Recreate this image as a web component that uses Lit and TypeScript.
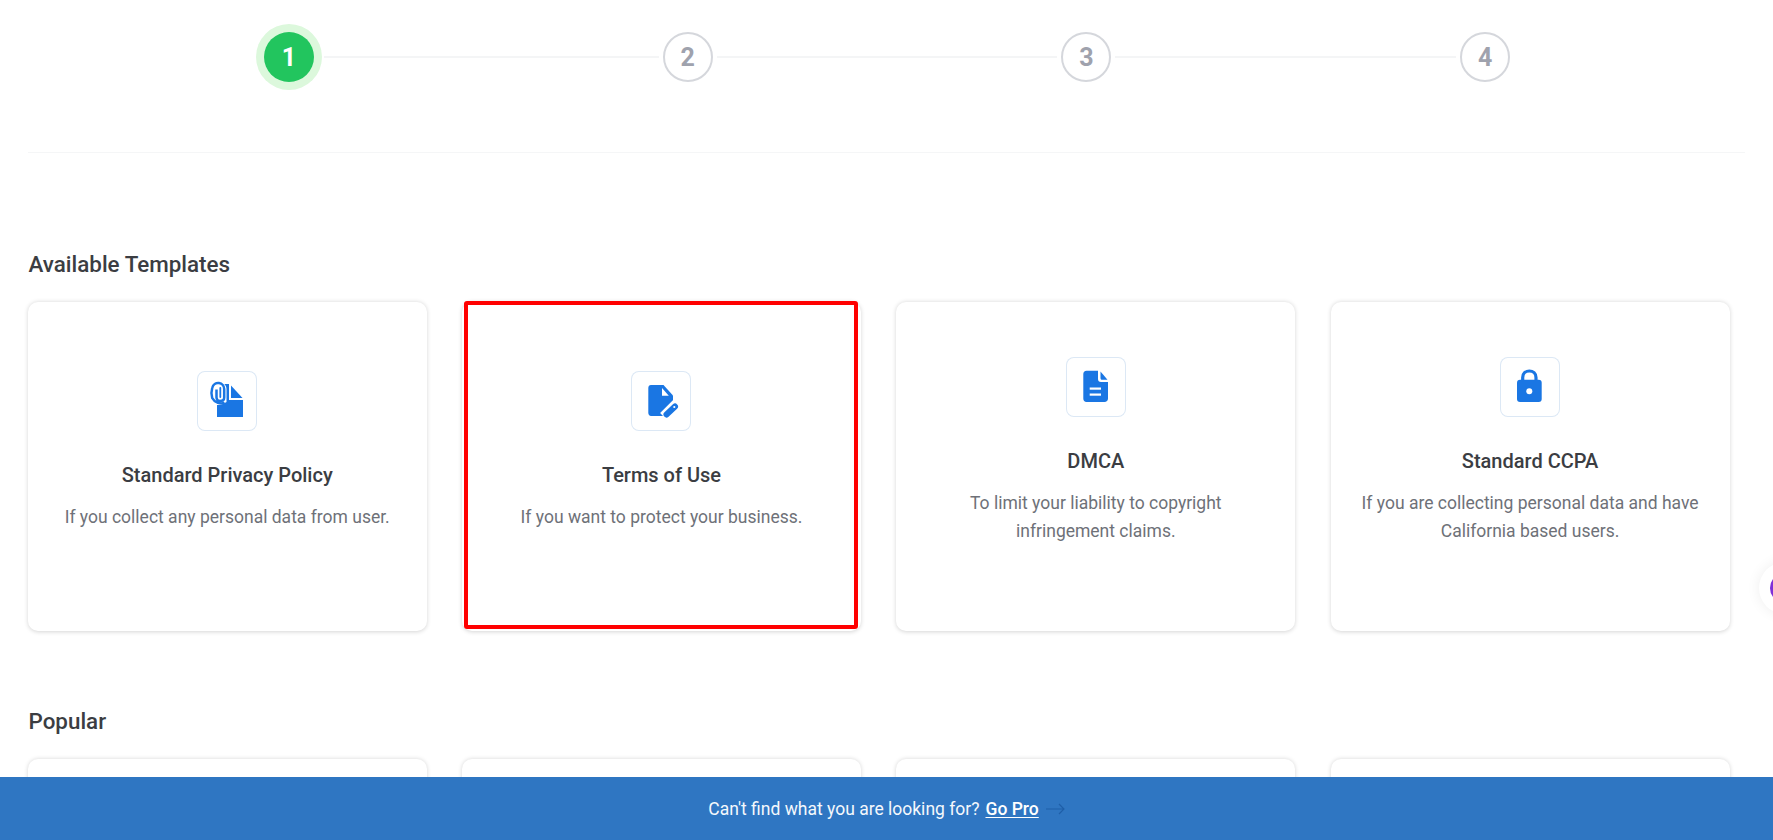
import { LitElement, html, css, svg } from "lit";
import { customElement } from "lit/decorators.js";

const BLUE = "#1a76e3";

const icons: Record<string, unknown> = {
  clip: svg`
    <path d="M20 13H32V29H46V46H20Z" fill="${BLUE}"/>
    <path d="M34 14.500L45.500 27H34Z" fill="${BLUE}"/>
    <path d="M22 11C26 11 29.500 14 29.500 18V31L24 34H20V11Z" fill="#fff"/>
    <path d="M27.500 31.500C24 34 17.500 31.500 15.200 27C14.300 24 14.300 20 15.200 17C16 13.500 19 11.600 22 12C25 12.400 27.200 15 27.200 18V26.500C27.200 28.800 25.200 30 23 30C21 30 19.500 28.500 19.500 26.500V18.500" fill="none" stroke="${BLUE}" stroke-width="2.500"/>
    <path d="M23.300 17V26" fill="none" stroke="${BLUE}" stroke-width="1.800" stroke-linecap="round"/>`,
  edit: svg`
    <path d="M20 14H32.500L42 24.500V41.500C42 43.500 41 45 39 45H20C18.300 45 17.300 43.500 17.300 41.500V17C17.300 15 18.300 14 20 14Z" fill="${BLUE}"/>
    <path d="M31 17L37.800 24.800H31Z" fill="#fff"/>
    <path d="M33 46L46 33" stroke="#fff" stroke-width="11" fill="none"/>
    <path d="M35.500 43.500L44 35.500" stroke="${BLUE}" stroke-width="6" stroke-linecap="round" fill="none"/>
    <circle cx="43.300" cy="36" r="1.100" fill="#fff"/>`,
  doc: svg`
    <path d="M20.500 13.700H32V22C32 24 33 25 35 25H42V41.500C42 43.700 40.500 45 38.500 45H20.500C18.500 45 17.300 43.700 17.300 41.500V17C17.300 15 18.500 13.700 20.500 13.700Z" fill="${BLUE}"/>
    <path d="M34.500 14.500L41.500 22.800H36C35 22.800 34.500 22 34.500 21Z" fill="${BLUE}"/>
    <rect x="23.700" y="30.500" width="11.300" height="2.200" fill="#fff"/>
    <rect x="23.700" y="36.500" width="11.300" height="2.200" fill="#fff"/>`,
  lock: svg`
    <path d="M22.700 24V20.500C22.700 16.500 25.500 14 29.300 14C33 14 36 16.500 36 20.500V24" fill="none" stroke="${BLUE}" stroke-width="3.200"/>
    <rect x="17" y="22.700" width="24.700" height="22.300" rx="3" fill="${BLUE}"/>
    <circle cx="29.300" cy="34.300" r="3" fill="#fff"/>`,
};

interface Tpl { icon: string; title: string; desc: string; marked?: boolean }

const available: Tpl[] = [
  { icon: "clip", title: "Standard Privacy Policy", desc: "If you collect any personal data from user." },
  { icon: "edit", title: "Terms of Use", desc: "If you want to protect your business.", marked: true },
  { icon: "doc", title: "DMCA", desc: "To limit your liability to copyright infringement claims." },
  { icon: "lock", title: "Standard CCPA", desc: "If you are collecting personal data and have California based users." },
];

@customElement("app-root")
export class AppRoot extends LitElement {
  static styles = css`
    :host {
      display: block;
      position: relative;
      width: 1773px;
      height: 840px;
      overflow: hidden;
      background: #fff;
      font-family: Roboto, "Noto Sans", sans-serif;
      color: #3b3d42;
    }
    .stepper {
      margin: 0 28px;
      padding: 32px 0 0 236px;
      height: 153px;
      box-sizing: border-box;
      border-bottom: 1px solid #f5f6f7;
      display: grid;
      grid-template-columns: repeat(3, 398.7px) 50px;
      align-items: start;
    }
    .step { display: flex; align-items: center; }
    .num {
      width: 50px;
      height: 50px;
      flex: none;
      box-sizing: border-box;
      border-radius: 50%;
      border: 2px solid #d5d7dc;
      background: #fff;
      color: #9fa2ad;
      font-size: 25px;
      font-weight: 700;
      display: flex;
      align-items: center;
      justify-content: center;
    }
    .num.active {
      background: #22c55e;
      border: none;
      color: #fff;
      box-shadow: 0 0 0 8px #dcf8dc;
    }
    .line { flex: 1; height: 2px; margin: 0 4px; background: #f4f5f6; }
    .line.first { margin-left: 10px; }
    h2 {
      margin: 0;
      font-size: 22.4px;
      line-height: 28px;
      font-weight: 500;
      color: #3b3d42;
      padding-left: 28.5px;
    }
    .h-available { margin-top: 97px; }
    .h-popular { margin-top: 76px; }
    .grid {
      display: grid;
      grid-template-columns: repeat(4, 399px);
      column-gap: 35.3px;
      padding-left: 27.7px;
      margin-top: 24px;
    }
    .card {
      position: relative;
      height: 329px;
      box-sizing: border-box;
      padding: 0 28px 32px;
      border-radius: 10px;
      background: #fff;
      box-shadow: 0 0.5px 4px rgba(0, 0, 0, 0.17);
      display: flex;
      flex-direction: column;
      align-items: center;
      justify-content: center;
      text-align: center;
    }
    .icon {
      width: 60px;
      height: 60px;
      border-radius: 8px;
      box-shadow: inset 0 0 0 1px #dce8f5;
      margin-bottom: 30px;
    }
    .icon svg { display: block; }
    h3 {
      margin: 0 0 14px;
      font-size: 20px;
      line-height: 28px;
      font-weight: 500;
      color: #3b3d42;
    }
    p {
      margin: 0;
      font-size: 17.5px;
      line-height: 28px;
      color: #6e7178;
    }
    .mark {
      position: absolute;
      left: 2.5px;
      right: 2.5px;
      top: -1px;
      bottom: 2px;
      border: 4.5px solid #ff0000;
      border-radius: 3px;
      pointer-events: none;
    }
    .bar {
      position: absolute;
      left: 0;
      right: 0;
      bottom: 0;
      height: 63px;
      background: #2f76c2;
      color: #f4f8fc;
      font-size: 17.5px;
      display: flex;
      align-items: center;
      justify-content: center;
      gap: 6px;
    }
    .bar a { color: #fff; font-weight: 500; text-decoration: underline; text-underline-offset: 2px; }
    .fab {
      position: absolute;
      left: 1759px;
      top: 562px;
      width: 52px;
      height: 52px;
      border-radius: 50%;
      background: #fff;
      box-shadow: 0 0 14px rgba(0, 0, 0, 0.07);
    }
    .fab i {
      position: absolute;
      left: 11px;
      top: 11px;
      width: 30px;
      height: 30px;
      border-radius: 50%;
      background: #7e2fd8;
    }
  `;

  private card(t: Tpl) {
    return html`<div class="card">
      <div class="icon">
        <svg width="60" height="60" viewBox="0 0 60 60">${icons[t.icon]}</svg>
      </div>
      <h3>${t.title}</h3>
      <p>${t.desc}</p>
      ${t.marked ? html`<div class="mark"></div>` : null}
    </div>`;
  }

  render() {
    return html`
      <div class="stepper">
        ${[1, 2, 3, 4].map(
          (n) => html`<div class="step">
            <div class="num ${n === 1 ? "active" : ""}">${n}</div>
            ${n < 4 ? html`<div class="line ${n === 1 ? "first" : ""}"></div>` : null}
          </div>`
        )}
      </div>
      <h2 class="h-available">Available Templates</h2>
      <div class="grid">${available.map((t) => this.card(t))}</div>
      <h2 class="h-popular">Popular</h2>
      <div class="grid">
        ${[0, 1, 2, 3].map(() => html`<div class="card"></div>`)}
      </div>
      <div class="fab"><i></i></div>
      <div class="bar">
        <span>Can't find what you are looking for?</span>
        <a href="#">Go Pro</a>
        <svg width="20" height="12" viewBox="0 0 20 12" fill="none" stroke="#1f5fa8" stroke-width="1.200">
          <path d="M1 6H19M14 1L19 6L14 11"/>
        </svg>
      </div>
    `;
  }
}
